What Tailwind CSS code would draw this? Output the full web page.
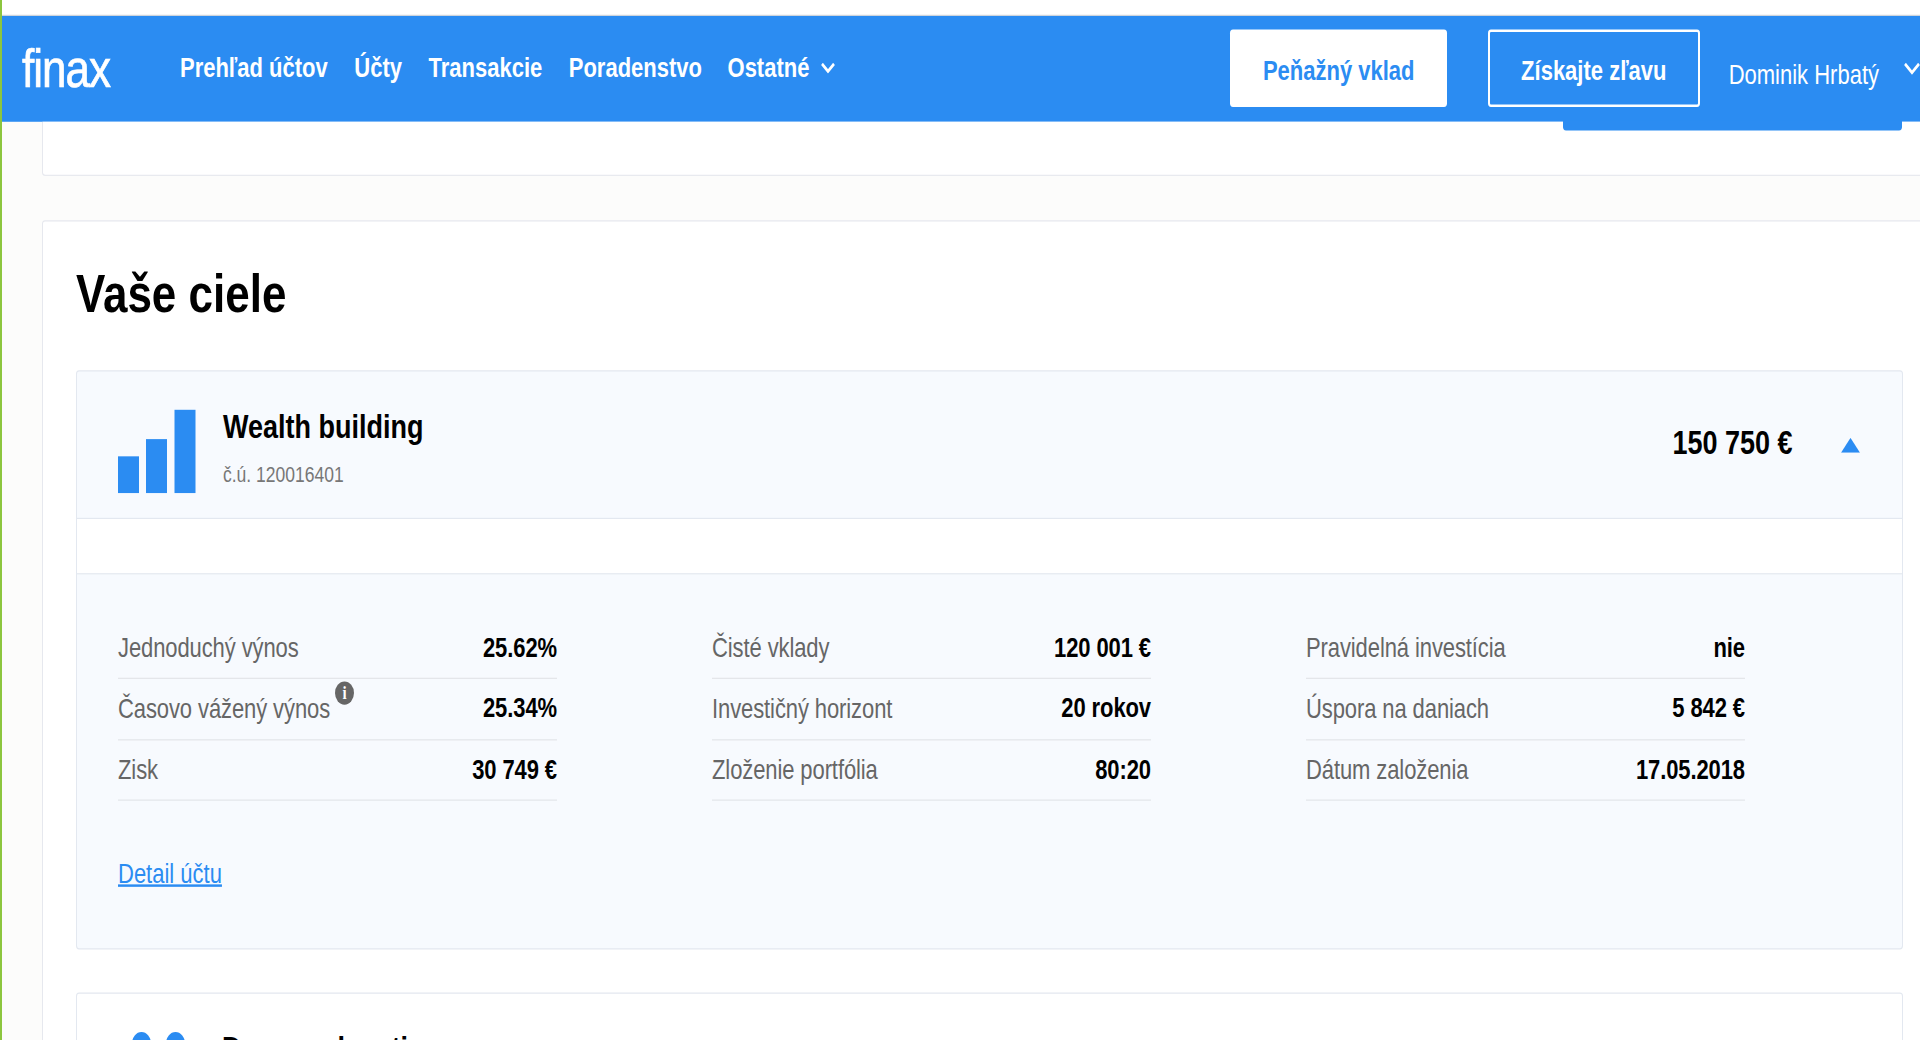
<!DOCTYPE html>
<html lang="sk">
  <head>
    <meta charset="UTF-8" />
    <title>Finax</title>
    <script src="https://cdn.jsdelivr.net/npm/@tailwindcss/browser@4"></script>
  </head>
  <body class="h-[1040px] overflow-hidden bg-white font-['Liberation_Sans',sans-serif]">
    <!-- the capture is stretched vertically, so everything is laid out flat and scaled once -->
    <div class="relative flex h-[846px] w-[1920px] origin-top scale-y-[1.23] overflow-hidden">
      <div class="w-[2px] shrink-0 bg-[#8cc63f]"></div>
      <div class="relative min-w-0 flex-1 bg-[#fcfcfb]">
        <div class="h-[13px] border-b border-gray-300 bg-white"></div>

        <header class="flex h-[85.5px] items-center whitespace-nowrap bg-[#2b8cf2] text-white">
          <div class="ml-[20px] w-[159px] text-[44px] leading-none tracking-[-1px] [-webkit-text-stroke:0.6px_white]">finax</div>
          <nav class="flex items-center gap-[26.500px] text-[22px] font-bold">
            <a>Prehľad účtov</a>
            <a>Účty</a>
            <a>Transakcie</a>
            <a>Poradenstvo</a>
            <a class="-ml-[1px] flex items-center gap-[12px]">
              Ostatné
              <svg class="h-[9px] w-[14px]" viewBox="0 0 14 9" fill="none" stroke="white" stroke-width="2.500"><path d="M1 1l6 6 6-6" /></svg>
            </a>
          </nav>
          <a class="ml-[395px] flex h-[63px] w-[218px] items-center justify-center rounded-[3px] bg-white pt-[4px] text-[22px] font-bold text-[#2b8cf2]">Peňažný vklad</a>
          <a class="ml-[41px] flex h-[63px] w-[213px] items-center justify-center rounded-[3px] border-2 border-white pt-[4px] text-[22px] font-bold">Získajte zľavu</a>
          <div class="ml-[29px] flex items-center gap-[25px] pt-[9px] text-[22px]">
            Dominik Hrbatý
            <svg class="mb-[9px] h-[10px] w-[16px] shrink-0" viewBox="0 0 16 10" fill="none" stroke="white" stroke-width="2.500"><path d="M1 1l7 7 7-7" /></svg>
          </div>
        </header>
        <div class="absolute top-[98px] left-[1561px] h-[7.500px] w-[339px] rounded-b-[3px] bg-[#2b8cf2]"></div>

        <section class="ml-[40px] h-[44px] w-[1900px] rounded-b-[3px] border border-t-0 border-[#e6e8ee] bg-white"></section>

        <section class="mt-[36px] ml-[40px] w-[1900px] rounded-[3px] border border-[#e6e8ee] bg-white pt-[34px] pl-[33px]">
          <h1 class="text-[44px] leading-[50px] font-bold text-black">Vaše ciele</h1>

          <article class="mt-[37.500px] w-[1827px] rounded-[3px] border border-[#e3e8f0] bg-[#f7fafe]">
            <div class="flex h-[120px] items-center border-b border-[#e3e8f0] pr-[42px] pl-[41px]">
              <svg class="mt-[10px] h-[68px] w-[78px] shrink-0" viewBox="0 0 78 68" fill="#2b8cf2">
                <rect x="0" y="38" width="21" height="30" />
                <rect x="28" y="24" width="21" height="44" />
                <rect x="56.500" y="0" width="21" height="68" />
              </svg>
              <div class="ml-[27px] pt-[4px]">
                <div class="text-[27px] leading-[32px] font-bold text-black">Wealth building</div>
                <div class="mt-[13px] text-[17.500px] leading-[20px] text-[#777]">č.ú. 120016401</div>
              </div>
              <div class="mb-[2px] ml-auto text-[27px] font-bold text-black">150 750 €</div>
              <svg class="ml-[48.500px] h-[12px] w-[19px]" viewBox="0 0 19 12" fill="#2b8cf2"><path d="M9.500 0L19 12H0z" /></svg>
            </div>

            <div class="h-[45px] border-b border-[#e3e8f0] bg-white"></div>

            <div class="h-[304px] pt-[35.500px] pl-[41px]">
              <div class="grid grid-cols-[439px_439px_439px] gap-x-[155px] text-[22px] tracking-[-0.1px]">
                <div class="flex h-[49.500px] items-center justify-between border-b border-[#e3e6ea]"><span class="text-[#666]">Jednoduchý výnos</span><b class="mb-[1px] text-black">25.62%</b></div>
                <div class="flex h-[49.500px] items-center justify-between border-b border-[#e3e6ea]"><span class="text-[#666]">Čisté vklady</span><b class="mb-[1px] text-black">120 001 €</b></div>
                <div class="flex h-[49.500px] items-center justify-between border-b border-[#e3e6ea]"><span class="text-[#666]">Pravidelná investícia</span><b class="mb-[1px] text-black">nie</b></div>

                <div class="flex h-[49.500px] items-center justify-between border-b border-[#e3e6ea]">
                  <span class="relative text-[#666]">Časovo vážený výnos
                    <span class="absolute -top-[6px] -right-[24px] flex h-[19px] w-[19px] items-center justify-center rounded-full bg-[#666] font-['Liberation_Serif',serif] text-[15px] leading-none font-bold text-white">i</span>
                  </span>
                  <b class="mb-[1px] text-black">25.34%</b>
                </div>
                <div class="flex h-[49.500px] items-center justify-between border-b border-[#e3e6ea]"><span class="text-[#666]">Investičný horizont</span><b class="mb-[1px] text-black">20 rokov</b></div>
                <div class="flex h-[49.500px] items-center justify-between border-b border-[#e3e6ea]"><span class="text-[#666]">Úspora na daniach</span><b class="mb-[1px] text-black">5 842 €</b></div>

                <div class="flex h-[49.500px] items-center justify-between border-b border-[#e3e6ea]"><span class="text-[#666]">Zisk</span><b class="mb-[1px] text-black">30 749 €</b></div>
                <div class="flex h-[49.500px] items-center justify-between border-b border-[#e3e6ea]"><span class="text-[#666]">Zloženie portfólia</span><b class="mb-[1px] text-black">80:20</b></div>
                <div class="flex h-[49.500px] items-center justify-between border-b border-[#e3e6ea]"><span class="text-[#666]">Dátum založenia</span><b class="mb-[1px] text-black">17.05.2018</b></div>
              </div>
              <a class="mt-[43px] inline-block text-[22px] text-[#2b8cf2] underline decoration-2">Detail účtu</a>
            </div>
          </article>

          <article class="mt-[35px] h-[100px] w-[1827px] rounded-t-[3px] border border-[#e3e8f0] bg-white pt-[30.500px] pl-[46px]">
            <div class="flex items-start">
              <div class="flex gap-[15px] pl-[9px]">
                <span class="h-[19px] w-[19px] rounded-full bg-[#2b8cf2]"></span>
                <span class="h-[19px] w-[19px] rounded-full bg-[#2b8cf2]"></span>
              </div>
              <div class="-mt-[2px] ml-[37px] text-[27px] leading-[32px] font-bold text-black">Dream education</div>
            </div>
          </article>
        </section>
      </div>
    </div>
  </body>
</html>
